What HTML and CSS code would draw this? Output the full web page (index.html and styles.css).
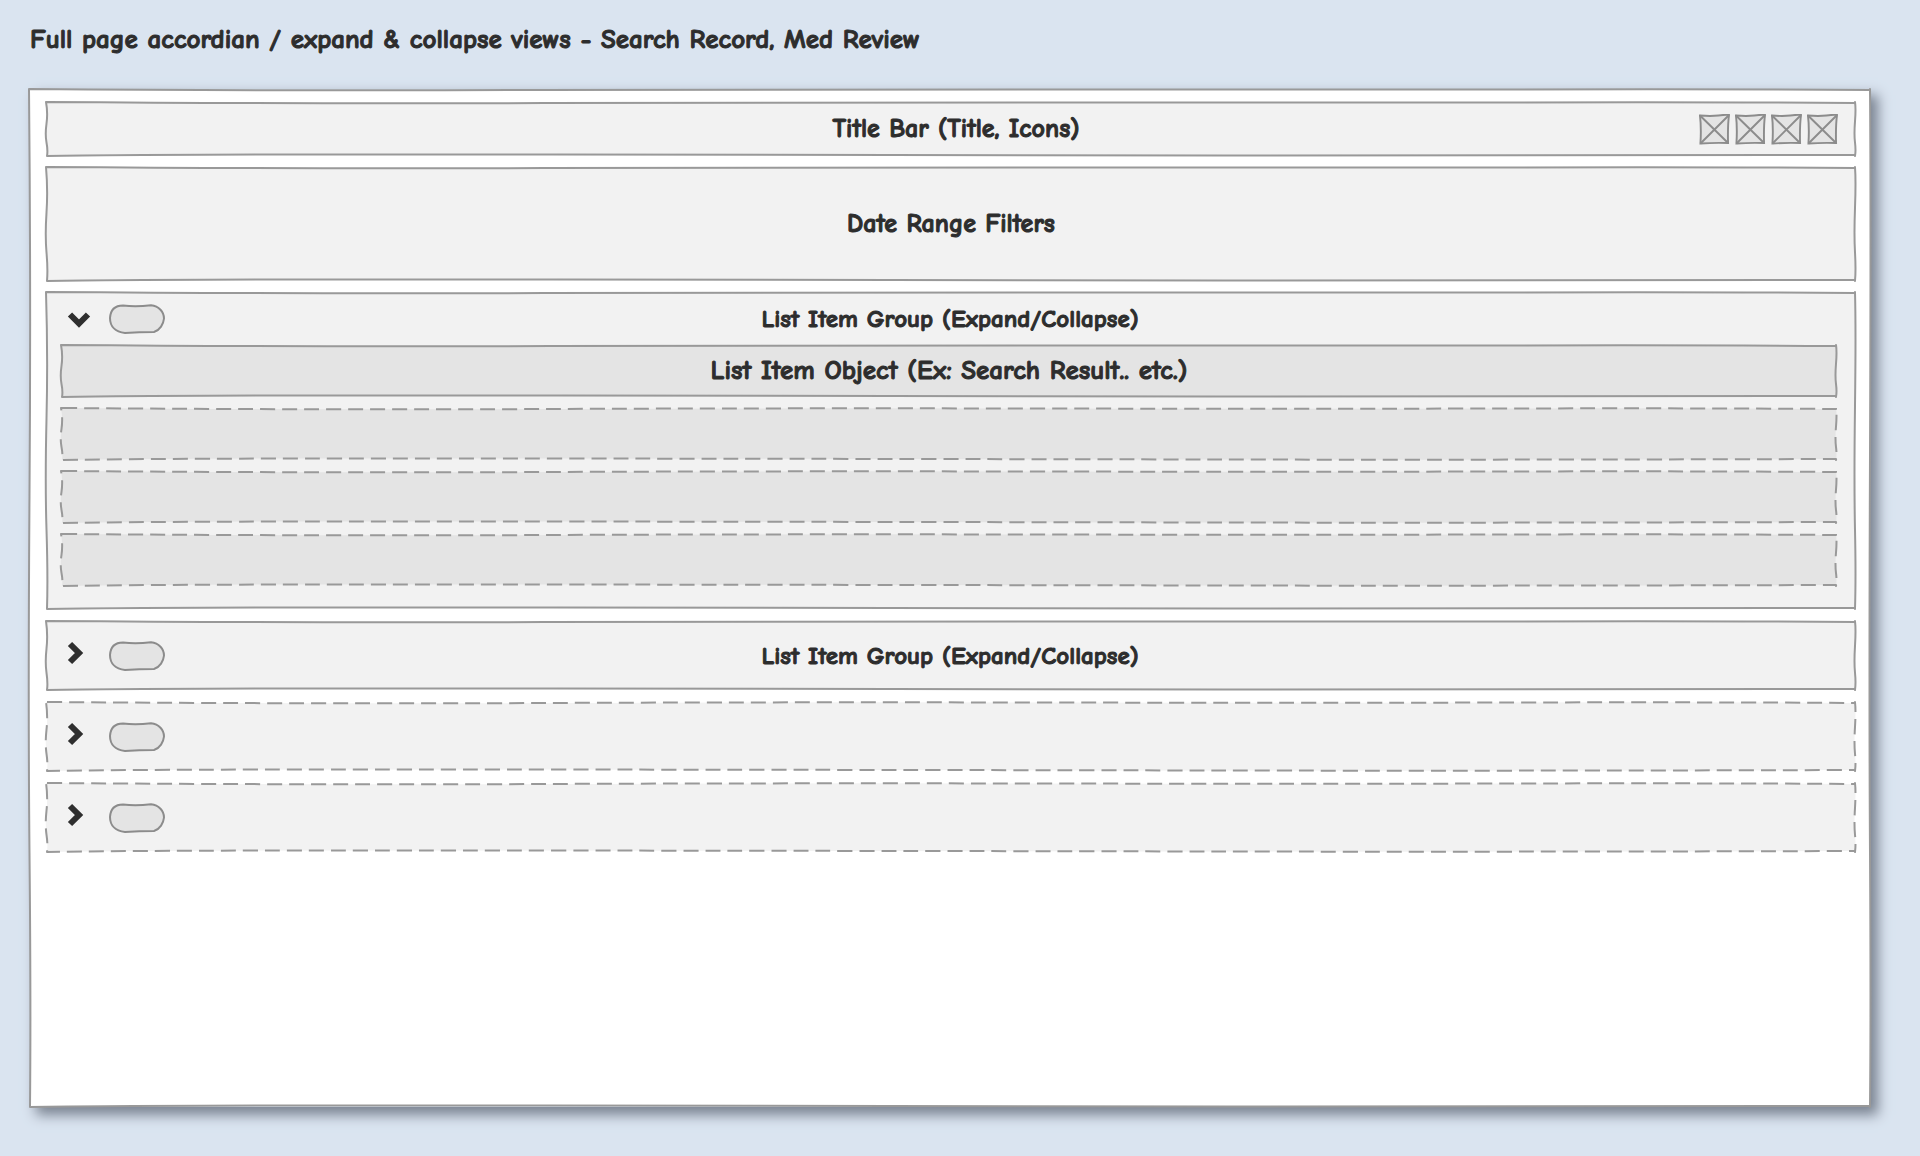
FILE: index.html
```html
<!DOCTYPE html>
<html lang="en">
<head>
<meta charset="utf-8">
<meta name="viewport" content="width=device-width, initial-scale=1">
<title>Accordion wireframe</title>
<link rel="stylesheet" href="styles.css">
</head>
<body>
<svg class="symbols" aria-hidden="true">
  <symbol id="chevron-down" viewBox="0 0 24 24">
    <path d="M3 7.500 12 16.500 21 7.500"/>
  </symbol>
  <symbol id="chevron-right" viewBox="0 0 24 24">
    <path d="M3 3 12 12 3 21"/>
  </symbol>
  <symbol id="placeholder" viewBox="0 0 32 32">
    <path class="tile" d="M1 1.500Q12 2.500 20 1.500T31 1Q29.500 12 30 30Q16 29.500 1.500 30.500Q2.500 14 1 1.500Z"/>
    <path d="M1 1.500 30 30M30.500 1.500 1.500 30.500"/>
  </symbol>
  <symbol id="pill" viewBox="0 0 56 30">
    <path class="tile" d="M14 1.500Q27 3 42 1.200C50 2 55 8 55 14.500C54.500 20 51 26 45 28Q30 28 16 29C6 28 1 22 1 14C1.500 6 6 1.500 14 1.500Z"/>
  </symbol>
</svg>

<h1 class="heading">Full page accordian / expand &amp; collapse views - Search Record, Med Review</h1>

<main class="panel" data-sketch>
  <header class="box title-bar" data-sketch>
    <h2 class="label">Title Bar (Title, Icons)</h2>
    <div class="icons">
      <button class="icon-button" type="button" aria-label="Icon 1"><svg><use href="#placeholder"/></svg></button>
      <button class="icon-button" type="button" aria-label="Icon 2"><svg><use href="#placeholder"/></svg></button>
      <button class="icon-button" type="button" aria-label="Icon 3"><svg><use href="#placeholder"/></svg></button>
      <button class="icon-button" type="button" aria-label="Icon 4"><svg><use href="#placeholder"/></svg></button>
    </div>
  </header>

  <section class="box filters" data-sketch>
    <h2 class="label">Date Range Filters</h2>
  </section>

  <section class="box group open" data-sketch>
    <div class="group-head">
      <button class="toggle" type="button" aria-expanded="true" aria-label="Collapse group"><svg><use href="#chevron-down"/></svg></button>
      <svg class="pill" aria-hidden="true"><use href="#pill"/></svg>
      <h2 class="label">List Item Group (Expand/Collapse)</h2>
    </div>
    <ul class="items">
      <li class="item" data-sketch><span class="label">List Item Object (Ex: Search Result.. etc.)</span></li>
      <li class="item dashed" data-sketch></li>
      <li class="item dashed" data-sketch></li>
      <li class="item dashed" data-sketch></li>
    </ul>
  </section>

  <section class="box group" data-sketch>
    <div class="group-head">
      <button class="toggle" type="button" aria-expanded="false" aria-label="Expand group"><svg><use href="#chevron-right"/></svg></button>
      <svg class="pill" aria-hidden="true"><use href="#pill"/></svg>
      <h2 class="label">List Item Group (Expand/Collapse)</h2>
    </div>
  </section>

  <section class="box group dashed" data-sketch>
    <div class="group-head">
      <button class="toggle" type="button" aria-expanded="false" aria-label="Expand group"><svg><use href="#chevron-right"/></svg></button>
      <svg class="pill" aria-hidden="true"><use href="#pill"/></svg>
    </div>
  </section>

  <section class="box group dashed" data-sketch>
    <div class="group-head">
      <button class="toggle" type="button" aria-expanded="false" aria-label="Expand group"><svg><use href="#chevron-right"/></svg></button>
      <svg class="pill" aria-hidden="true"><use href="#pill"/></svg>
    </div>
  </section>
</main>
<script src="sketch.js"></script>
</body>
</html>
```
FILE: styles.css
```css
* {
  box-sizing: border-box;
}

body {
  display: flex;
  flex-direction: column;
  min-height: 100vh;
  margin: 0;
  padding: 0 50px 49px 30px;
  background: #dae4f0;
  color: #2d2d2d;
  font-family: "Comic Sans MS", "Comic Neue", "Open Sans", sans-serif;
  font-weight: 700;
  font-size: 26px;
  line-height: 32px;
  -webkit-text-stroke: 1px #2d2d2d;
}

.symbols {
  position: absolute;
  width: 0;
  height: 0;
}

.heading {
  margin: 0;
  padding: 24px 0 33px;
  font-size: 27px;
  line-height: 32px;
}

.label {
  margin: 0;
  font-size: inherit;
  font-weight: inherit;
  text-align: center;
}

/* Hand-drawn outline, filled in by sketch.js */
[data-sketch] {
  position: relative;
  isolation: isolate;
}

.outline {
  position: absolute;
  inset: 0;
  z-index: -1;
  width: 100%;
  height: 100%;
  overflow: visible;
  fill: #f2f2f2;
  stroke: #999;
  stroke-width: 2;
  stroke-linejoin: round;
}

.panel {
  display: flex;
  flex: 1;
  flex-direction: column;
  gap: 11px;
  padding: 13px 15px 17px 17px;
  box-shadow: 7px 7px 12px 1px #7b8492;
}

.panel > .outline {
  fill: #fff;
}

.dashed > .outline {
  stroke-dasharray: 15 7;
}

.title-bar {
  display: grid;
  grid-template-columns: 1fr auto 1fr;
  align-items: center;
  height: 54px;
  padding: 0 17px 0 27px;
}

.title-bar .label {
  grid-column: 2;
}

.icons {
  display: flex;
  justify-content: flex-end;
  gap: 5px;
}

button {
  display: block;
  padding: 0;
  border: 0;
  background: none;
  color: inherit;
  cursor: pointer;
}

.icon-button,
.icon-button svg {
  display: block;
  width: 31px;
  height: 31px;
}

.icon-button svg,
.pill {
  fill: none;
  stroke: #8c8c8c;
  stroke-width: 2;
}

.tile {
  fill: #e4e4e4;
}

.filters {
  display: grid;
  place-items: center;
  height: 114px;
}

.group {
  font-size: 25px;
}

.group + .group {
  margin-top: 1px;
}

.group-head {
  display: grid;
  grid-template-columns: 32px 56px 1fr 100px;
  gap: 10px;
  align-items: center;
  height: 69px;
  padding: 0 20px;
}

.open .group-head {
  height: 53px;
}

.toggle,
.toggle svg {
  display: block;
  width: 24px;
  height: 24px;
}

.toggle {
  margin-bottom: 6px;
}

.open .toggle {
  margin-bottom: 0;
}

.toggle svg {
  fill: none;
  stroke: #2f2f2f;
  stroke-width: 6;
}

.pill {
  display: block;
  width: 56px;
  height: 30px;
}

.items {
  display: grid;
  gap: 11px;
  margin: 0;
  padding: 0 19px 23px 15px;
  list-style: none;
}

.item {
  display: grid;
  place-items: center;
  height: 52px;
  font-size: 27px;
}

.item > .outline {
  fill: #e4e4e4;
}
```
FILE: sketch.js
```javascript
// Draws a slightly wavering outline behind every [data-sketch] box.
// Each entry: position along the edge (0..1), drift across it in pixels.
const EDGES = {
  top: [[0, 0], [0.15, 2], [0.4, 0], [0.7, 1], [0.92, 0], [1, 1]],
  right: [[0, 0], [0.12, 1], [0.6, -1], [0.9, 1], [1, 0]],
  bottom: [[1, 0], [0.8, 1], [0.5, 0], [0.06, -1], [0, 1]],
  left: [[1, 0], [0.9, 1], [0.6, -2], [0.2, 1], [0, -1]]
};

function points(w, h) {
  return [
    EDGES.top.map(([t, d]) => [t * w, d]),
    EDGES.right.map(([t, d]) => [w + d, t * h]),
    EDGES.bottom.map(([t, d]) => [t * w, h + d - 1]),
    EDGES.left.map(([t, d]) => [d, t * h])
  ];
}

function edgePath(edge) {
  let d = ` L${edge[0]}`;
  for (let i = 1; i < edge.length - 1; i++) {
    const [x, y] = edge[i];
    const [nx, ny] = edge[i + 1];
    const last = i === edge.length - 2;
    d += ` Q${x},${y} ${last ? nx : (x + nx) / 2},${last ? ny : (y + ny) / 2}`;
  }
  return d;
}

function draw(box) {
  const w = box.offsetWidth;
  const h = box.offsetHeight;
  const d = points(w, h).map(edgePath).join("");
  box.outlinePath.setAttribute("d", `M0,0${d} Z`);
}

const observer = new ResizeObserver(entries => entries.forEach(e => draw(e.target)));

document.querySelectorAll("[data-sketch]").forEach(box => {
  const ns = "http://www.w3.org/2000/svg";
  const svg = document.createElementNS(ns, "svg");
  svg.setAttribute("class", "outline");
  svg.setAttribute("aria-hidden", "true");
  box.outlinePath = document.createElementNS(ns, "path");
  svg.append(box.outlinePath);
  box.append(svg);
  draw(box);
  observer.observe(box);
});
```
